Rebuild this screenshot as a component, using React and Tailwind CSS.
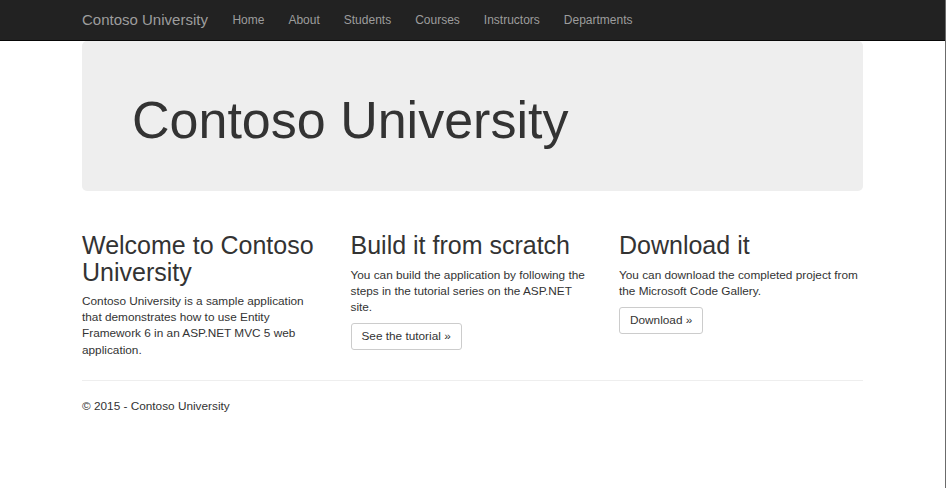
import React from 'react';

const navLinks = ['Home', 'About', 'Students', 'Courses', 'Instructors', 'Departments'];

const columns = [
  {
    title: 'Welcome to Contoso University',
    text: 'Contoso University is a sample application that demonstrates how to use Entity Framework 6 in an ASP.NET MVC 5 web application.',
  },
  {
    title: 'Build it from scratch',
    text: 'You can build the application by following the steps in the tutorial series on the ASP.NET site.',
    button: 'See the tutorial »',
  },
  {
    title: 'Download it',
    text: 'You can download the completed project from the Microsoft Code Gallery.',
    button: 'Download »',
  },
];

function Navbar() {
  return (
    <div className="h-[41px] bg-[#222] border-b border-[#080808]">
      <div className="w-[781px] mx-auto h-full flex items-center">
        <a href="#" className="text-[15px] text-[#9d9d9d] pr-[12.5px]">
          Contoso University
        </a>
        {navLinks.map((link) => (
          <a key={link} href="#" className="text-[12px] text-[#9d9d9d] px-[12px]">
            {link}
          </a>
        ))}
      </div>
    </div>
  );
}

export default function App() {
  return (
    <div
      className="min-h-[488px] bg-white text-[#333] border-r border-[#6b6b6b]"
      style={{ fontFamily: '"Liberation Sans", Arial, Helvetica, sans-serif' }}
    >
      <Navbar />
      <div className="w-[781px] mx-auto">
        {/* Jumbotron */}
        <div className="h-[150px] bg-[#eee] rounded-[5px] pl-[50px] pt-[51px]">
          <h1 className="text-[52px] leading-[57px] font-normal">Contoso University</h1>
        </div>

        <div className="grid grid-cols-3 gap-x-[24.5px] mt-[41px]">
          {columns.map((col) => (
            <div key={col.title}>
              <h2 className="text-[25px] leading-[26.5px] font-normal mb-[8px]">{col.title}</h2>
              <p className="text-[11.8px] leading-[16.2px] mb-[8px]">{col.text}</p>
              {col.button && (
                <button className="h-[27px] px-[10px] text-[11.8px] border border-[#ccc] rounded-[3px] bg-white text-[#333]">
                  {col.button}
                </button>
              )}
            </div>
          ))}
        </div>

        <hr className="border-0 border-t border-[#eee] mt-[14px]" />
        <footer className="pt-[17px] text-[11.8px] leading-[16px]">
          <p>&copy; 2015 - Contoso University</p>
        </footer>
      </div>
    </div>
  );
}
